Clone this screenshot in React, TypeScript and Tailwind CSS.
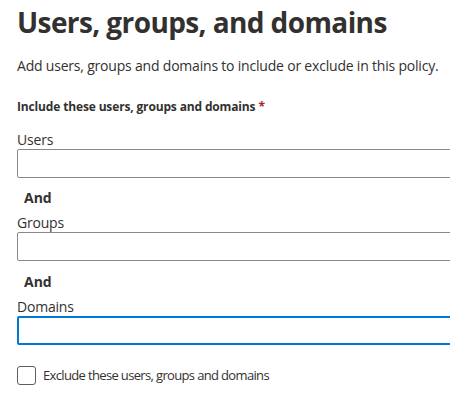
import React from "react";

const font = { fontFamily: '"Open Sans", "Noto Sans", sans-serif' };

function Field({ label, focused }: { label: string; focused?: boolean }) {
  return (
    <div className="flex flex-col">
      <label className="text-[14px] leading-[19px] tracking-[-0.2px] text-[#323130]">{label}</label>
      <div
        className={
          focused
            ? "mt-[0px] h-[29px] w-[470px] rounded-[2px] border-2 border-[#0078d4] bg-white"
            : "mt-[0px] h-[29px] w-[470px] rounded-[2px] border border-[#8a8886] bg-white"
        }
      />
    </div>
  );
}

export default function App() {
  return (
    <div
      className="h-[407px] w-[450px] overflow-hidden bg-white pl-[17px] pt-[2px] text-[#323130]"
      style={font}
    >
      <h1 className="whitespace-nowrap text-[28px] font-bold leading-[40px] tracking-[-0.6px] text-[#323130]">
        Users, groups, and domains
      </h1>
      <p className="mt-[14px] whitespace-nowrap text-[14px] leading-[20px] tracking-[-0.2px]">
        Add users, groups and domains to include or exclude in this policy.
      </p>
      <div className="mt-[23px] whitespace-nowrap text-[12px] font-bold leading-[16px] tracking-[-0.15px]">
        Include these users, groups and domains <span className="text-[#a4262c]">*</span>
      </div>

      <div className="mt-[15px]">
        <Field label="Users" />
      </div>
      <div className="mt-[10px] pl-[7px] text-[14px] font-bold leading-[19px]">And</div>
      <div className="mt-[6px]">
        <Field label="Groups" />
      </div>
      <div className="mt-[11px] pl-[7px] text-[14px] font-bold leading-[19px]">And</div>
      <div className="mt-[6px]">
        <Field label="Domains" focused />
      </div>

      <label className="mt-[21px] flex items-center gap-[7px]">
        <span className="h-[19px] w-[19px] rounded-[3px] border border-[#605e5c] bg-white" />
        <span className="whitespace-nowrap text-[13px] leading-[19px] tracking-[-0.65px]">
          Exclude these users, groups and domains
        </span>
      </label>
    </div>
  );
}
